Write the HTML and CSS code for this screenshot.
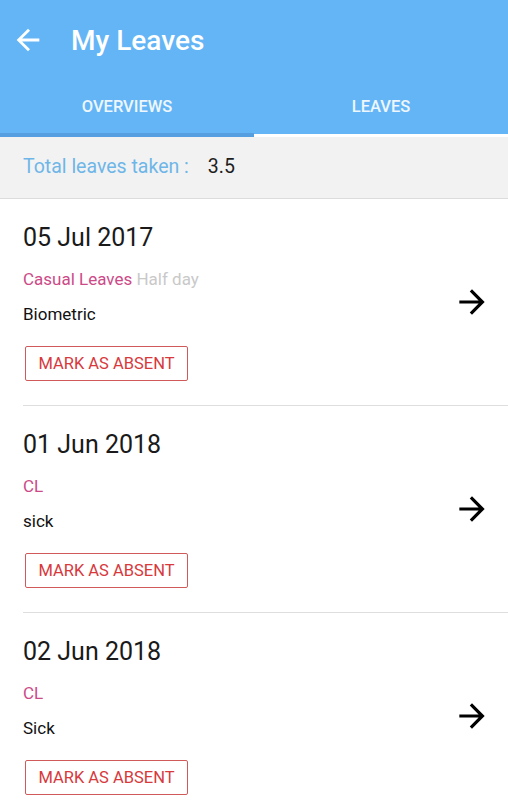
FILE: index.html
```html
<!DOCTYPE html>
<html>
<head>
<meta charset="utf-8">
<link rel="stylesheet" href="styles.css">
</head>
<body>
<div class="appbar">
  <div class="toolbar">
    <svg class="back" viewBox="0 0 24 24"><path d="M20 11H7.83l5.59-5.59L12 4l-8 8 8 8 1.41-1.41L7.83 13H20v-2z" fill="#fff"/></svg>
    <div class="title">My Leaves</div>
  </div>
  <div class="tabs">
    <div class="tab tab-off">OVERVIEWS</div>
    <div class="tab tab-on">LEAVES</div>
  </div>
</div>
<div class="summary">
  <span class="summary-label">Total leaves taken :</span>
  <span class="summary-value">3.5</span>
</div>
<div class="list">
  <div class="item">
    <div class="info">
      <div class="date">05 Jul 2017</div>
      <div class="type"><span class="type-name">Casual Leaves</span> <span class="half">Half day</span></div>
      <div class="reason">Biometric</div>
      <button class="absent">MARK AS ABSENT</button>
    </div>
    <svg class="go" viewBox="0 0 24 24"><path d="M12 4l-1.41 1.41L16.17 11H4v2h12.17l-5.58 5.59L12 20l8-8z" fill="#000"/></svg>
  </div>
  <div class="item">
    <div class="info">
      <div class="date">01 Jun 2018</div>
      <div class="type"><span class="type-name">CL</span></div>
      <div class="reason">sick</div>
      <button class="absent">MARK AS ABSENT</button>
    </div>
    <svg class="go" viewBox="0 0 24 24"><path d="M12 4l-1.41 1.41L16.17 11H4v2h12.17l-5.58 5.59L12 20l8-8z" fill="#000"/></svg>
  </div>
  <div class="item">
    <div class="info">
      <div class="date">02 Jun 2018</div>
      <div class="type"><span class="type-name">CL</span></div>
      <div class="reason">Sick</div>
      <button class="absent">MARK AS ABSENT</button>
    </div>
    <svg class="go" viewBox="0 0 24 24"><path d="M12 4l-1.41 1.41L16.17 11H4v2h12.17l-5.58 5.59L12 20l8-8z" fill="#000"/></svg>
  </div>
</div>
</body>
</html>
```

FILE: styles.css
```css
* { box-sizing: border-box; }
html, body { margin: 0; padding: 0; }
body {
  font-family: Roboto, "Noto Sans", Arial, sans-serif;
  background: #fff;
  width: 508px;
  overflow: hidden;
}
.appbar {
  background: #64b5f6;
}
.toolbar {
  height: 80px;
  display: flex;
  align-items: center;
  padding-left: 11px;
}
.back {
  width: 34px;
  height: 34px;
}
.title {
  color: #fff;
  font-size: 28px;
  font-weight: 500;
  margin-left: 26px;
}
.tabs {
  display: flex;
  height: 57px;
}
.tab {
  flex: 1;
  display: flex;
  align-items: center;
  justify-content: center;
  color: #eef7fe;
  font-size: 16.5px;
  font-weight: 500;
}
.tab-off {
  border-bottom: 4px solid #559fe0;
}
.tab-on {
  border-bottom: 3px solid #fff;
  padding-bottom: 1px;
}
.summary {
  background: #f2f2f2;
  height: 62px;
  border-bottom: 1px solid #dcdcdc;
  display: flex;
  align-items: center;
  padding-left: 23px;
  padding-bottom: 2px;
  font-size: 19.5px;
}
.summary-label {
  color: #6fb6e8;
}
.summary-value {
  color: #1e1e1e;
  margin-left: 19px;
}
.list {
  padding-left: 23px;
}
.item {
  display: flex;
  align-items: center;
  border-bottom: 1px solid #dedede;
  height: 207px;
  padding-right: 17px;
}
.info {
  flex: 1;
  display: flex;
  flex-direction: column;
  align-items: flex-start;
}
.date {
  font-size: 25px;
  line-height: 30px;
  color: #1a1a1a;
}
.type {
  font-size: 17px;
  line-height: 20px;
  margin-top: 16px;
}
.type-name {
  color: #cc4a88;
}
.half {
  color: #c9c9c9;
}
.reason {
  font-size: 17px;
  line-height: 20px;
  margin-top: 15px;
  color: #111;
}
.absent {
  margin-top: 22px;
  margin-left: 2px;
  height: 35px;
  width: 163px;
  padding: 0;
  background: #fff;
  border: 1px solid #d05a5a;
  border-radius: 2px;
  color: #d7393d;
  font-family: Roboto, "Noto Sans", Arial, sans-serif;
  font-size: 16.5px;
}
.go {
  width: 38px;
  height: 38px;
  flex: none;
}
```
